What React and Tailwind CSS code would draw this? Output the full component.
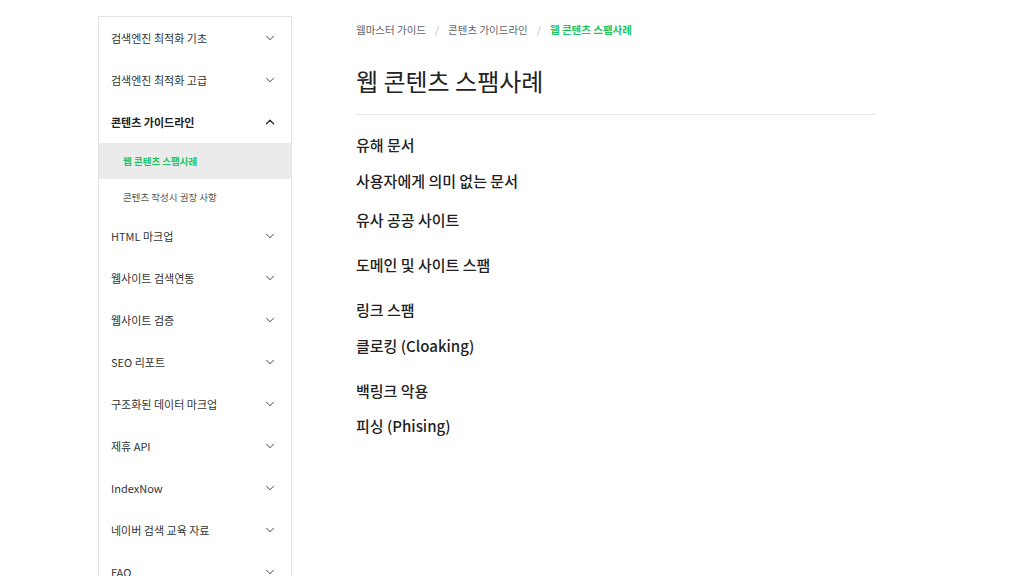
import React from 'react';
import { ChevronDown, ChevronUp } from 'lucide-react';

const font = { fontFamily: '"Noto Sans CJK KR", "Noto Sans", sans-serif' };

const menu = [
  { label: '검색엔진 최적화 기초' },
  { label: '검색엔진 최적화 고급' },
  {
    label: '콘텐츠 가이드라인',
    open: true,
    children: [
      { label: '웹 콘텐츠 스팸사례', active: true },
      { label: '콘텐츠 작성시 권장 사항' },
    ],
  },
  { label: 'HTML 마크업' },
  { label: '웹사이트 검색연동' },
  { label: '웹사이트 검증' },
  { label: 'SEO 리포트' },
  { label: '구조화된 데이터 마크업' },
  { label: '제휴 API' },
  { label: 'IndexNow' },
  { label: '네이버 검색 교육 자료' },
  { label: 'FAQ' },
];

// gap above each entry, taken from the reference
const topics = [
  { label: '유해 문서', mt: 'mt-0' },
  { label: '사용자에게 의미 없는 문서', mt: 'mt-[14px]' },
  { label: '유사 공공 사이트', mt: 'mt-[17px]' },
  { label: '도메인 및 사이트 스팸', mt: 'mt-[23px]' },
  { label: '링크 스팸', mt: 'mt-[23px]' },
  { label: '클로킹 (Cloaking)', mt: 'mt-[14px]' },
  { label: '백링크 악용', mt: 'mt-[23px]' },
  { label: '피싱 (Phising)', mt: 'mt-[13px]' },
];

const Sidebar = () => (
  <aside className="w-[194px] shrink-0 mt-4 border border-[#e4e4e4] self-start">
    {menu.map((item) => (
      <div key={item.label}>
        <div className="h-[42px] flex items-center justify-between pl-3 pr-[14px]">
          <span
            className={`text-[11px] ${item.open ? 'text-[#222] font-bold' : 'text-[#333]'}`}
          >
            {item.label}
          </span>
          {item.open ? (
            <ChevronUp size={14} strokeWidth={2.5} className="text-[#333]" />
          ) : (
            <ChevronDown size={14} strokeWidth={1.75} className="text-[#666]" />
          )}
        </div>
        {item.children &&
          item.children.map((c) => (
            <div
              key={c.label}
              className={`flex items-center pl-6 h-[36px] ${c.active ? 'bg-[#ebebeb]' : ''}`}
            >
              <span
                className={`text-[9.5px] ${
                  c.active ? 'text-[#19c662] font-bold' : 'text-[#555]'
                }`}
              >
                {c.label}
              </span>
            </div>
          ))}
      </div>
    ))}
  </aside>
);

export default function App() {
  return (
    <div className="w-[1024px] h-[576px] overflow-hidden bg-white" style={font}>
      <div className="flex pl-[98px]">
        <Sidebar />
        <main className="ml-[64px] w-[519px] pt-[20px]">
          <nav className="flex items-center text-[10.5px] text-[#666] h-[20px]">
            <span>웹마스터 가이드</span>
            <span className="mx-[9px] text-[#bbb]">/</span>
            <span>콘텐츠 가이드라인</span>
            <span className="mx-[9px] text-[#bbb]">/</span>
            <span className="text-[#19c662] font-bold">웹 콘텐츠 스팸사례</span>
          </nav>
          <h1 className="mt-[24px] text-[24px] leading-[34px] text-[#222] font-normal pb-[16px] border-b border-[#e6e6e6]">
            웹 콘텐츠 스팸사례
          </h1>
          <ul className="mt-[19px]">
            {topics.map((t) => (
              <li
                key={t.label}
                className={`${t.mt} text-[15px] leading-[22px] font-medium text-[#222]`}
              >
                {t.label}
              </li>
            ))}
          </ul>
        </main>
      </div>
    </div>
  );
}
